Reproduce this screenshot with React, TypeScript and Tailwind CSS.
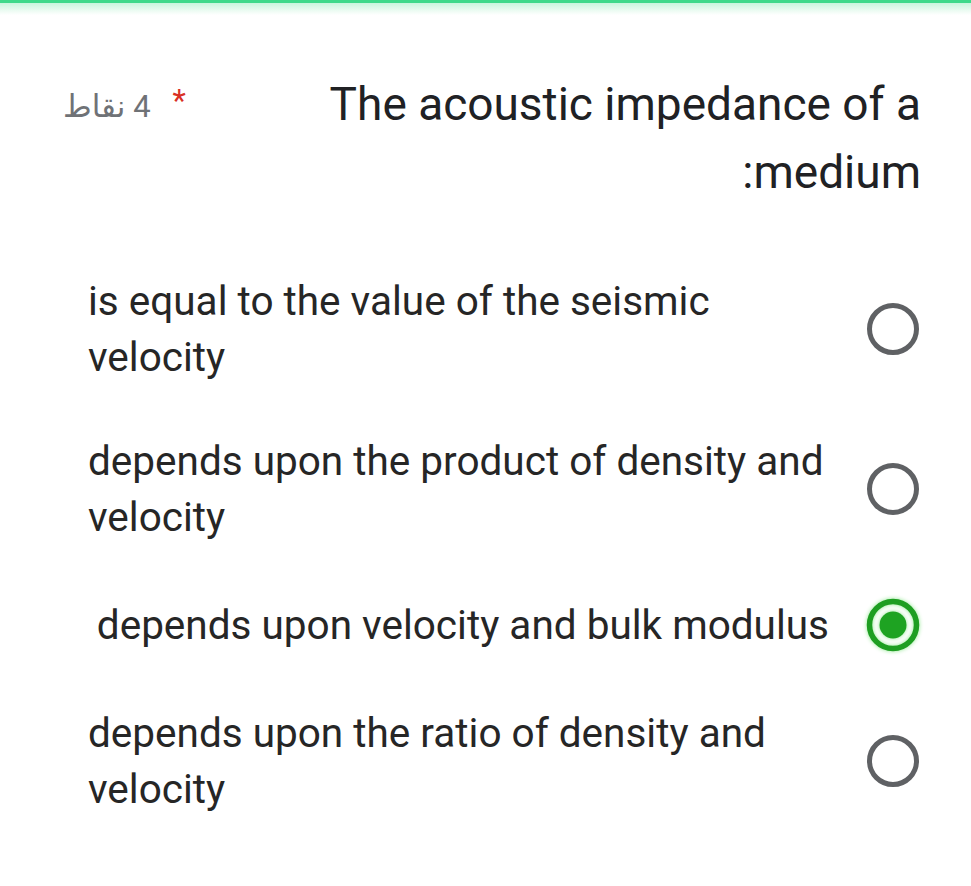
import React from "react";

const options = [
  { text: "is equal to the value of the seismic velocity", selected: false, mt: "mt-0" },
  { text: "depends upon the product of density and velocity", selected: false, mt: "mt-[48px]" },
  { text: "depends upon velocity and bulk modulus", selected: true, mt: "mt-[52px]" },
  { text: "depends upon the ratio of density and velocity", selected: false, mt: "mt-[52px]" },
];

function Radio({ selected }: { selected: boolean }) {
  if (selected) {
    return (
      <svg width="56" height="56" viewBox="0 0 56 56" className="shrink-0 drop-shadow-[0_0_2px_#8ee88e]">
        <circle cx="28" cy="28" r="23.5" fill="none" stroke="#1e9e22" strokeWidth="5.5" />
        <circle cx="28" cy="28" r="13.5" fill="#1ea322" />
      </svg>
    );
  }
  return (
    <svg width="56" height="56" viewBox="0 0 56 56" className="shrink-0">
      <circle cx="28" cy="28" r="23.5" fill="none" stroke="#5f6164" strokeWidth="5" />
    </svg>
  );
}

export default function App() {
  return (
    <div className="w-[971px] h-[886px] bg-white overflow-hidden font-['Roboto','DejaVu_Sans',sans-serif]">
      <div className="h-[3px] bg-[#3fd98a]" />
      <div className="h-[12px] bg-gradient-to-b from-[#c9f5dd] to-white" />
      <div className="pl-[63px] pr-[50px] pt-[55px]">
        <div className="flex items-start justify-between">
          <div className="flex items-center gap-[22px] h-[68px] mt-[2px]">
            <span dir="rtl" className="text-[31px] text-[#6f7276] leading-none">4 نقاط</span>
            <span className="text-[31px] text-[#d93025] leading-none -mt-[12px]">*</span>
          </div>
          <div dir="rtl" className="text-right text-[46px] leading-[68px] text-[#202124]">
            The acoustic impedance of a
            <br />
            medium:
          </div>
        </div>
        <div className="mt-[67px] pl-[25px] flex flex-col">
          {options.map((o, i) => (
            <div key={i} className={`flex items-center justify-end gap-[36px] ${o.mt}`}>
              <div dir="ltr" className="max-w-[746px] text-left text-[40.5px] leading-[56px] text-[#262626]">
                {o.text}
              </div>
              <Radio selected={o.selected} />
            </div>
          ))}
        </div>
      </div>
    </div>
  );
}
